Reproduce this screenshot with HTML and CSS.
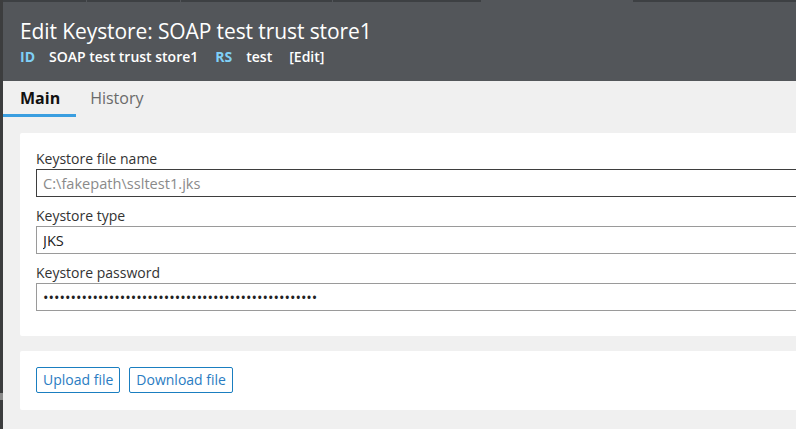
FILE: index.html
```html
<!DOCTYPE html>
<html>
<head>
<meta charset="utf-8">
<link rel="stylesheet" href="styles.css">
</head>
<body>
<div class="app">
  <div class="edge"><span class="grip"></span></div>
  <div class="main">
    <header class="header">
      <div class="strip">
        <span class="seg s1"></span><span class="seg s2"></span><span class="seg s3"></span><span class="seg s4"></span><span class="seg active"></span><span class="seg s5"></span>
      </div>
      <h1 class="title">Edit Keystore: SOAP test trust store1</h1>
      <div class="meta">
        <span class="key">ID</span><span class="val">SOAP test trust store1</span>
        <span class="key">RS</span><span class="val">test</span>
        <span class="val edit">[Edit]</span>
      </div>
    </header>
    <nav class="tabs">
      <span class="tab current">Main</span>
      <span class="tab">History</span>
    </nav>
    <div class="content">
      <section class="panel form">
        <label class="field">
          <span class="label">Keystore file name</span>
          <input class="input readonly focused" type="text" value="C:\fakepath\ssltest1.jks" readonly>
        </label>
        <label class="field">
          <span class="label">Keystore type</span>
          <input class="input" type="text" value="JKS">
        </label>
        <label class="field">
          <span class="label">Keystore password</span>
          <input class="input" type="password" value="soaptestpasswordsoaptestpasswordsoaptestpassword12">
        </label>
      </section>
      <section class="panel actions">
        <button class="btn">Upload file</button>
        <button class="btn">Download file</button>
      </section>
    </div>
  </div>
</div>
</body>
</html>
```
FILE: styles.css
```css
* { box-sizing: border-box; }
html, body { margin: 0; padding: 0; }
body {
  width: 796px;
  height: 429px;
  overflow: hidden;
  background: #f0f0f0;
  font-family: "Open Sans", "Noto Sans", sans-serif;
}
.app { display: flex; height: 429px; }
.edge {
  width: 3px;
  flex: none;
  background: #3c3d3e;
  display: flex;
  flex-direction: column;
  padding-top: 393px;
}
.grip { height: 7px; background: #8a8a8a; }
.main { flex: 1; display: flex; flex-direction: column; min-width: 0; }
.header {
  background: #53565a;
  height: 81px;
  color: #fff;
  padding: 0 0 0 17px;
}
.strip {
  display: flex;
  height: 2px;
  margin-left: -17px;
  gap: 1px;
}
.seg { background: #3d4043; height: 2px; }
.s1 { width: 83px; }
.s2 { width: 93px; }
.s3 { width: 151px; }
.s4 { width: 148px; }
.seg.active { background: #53565a; width: 152px; margin-left: -1px; margin-right: -1px; }
.s5 { flex: 1; }
.title {
  margin: 15px 0 0 0;
  font-weight: 400;
  font-size: 21px;
  line-height: 28px;
  letter-spacing: -0.1px;
}
.meta {
  display: flex;
  align-items: baseline;
  margin-top: 2px;
  font-size: 14px;
  font-weight: 600;
  line-height: 20px;
}
.key { color: #7fd0f7; font-weight: 700; margin-right: 14px; }
.val { margin-right: 17px; }
.tabs {
  height: 36px;
  display: flex;
  align-items: stretch;
}
.tab {
  font-size: 16px;
  line-height: 34px;
  color: #6a6a6a;
  padding: 0 16px 0 14px;
  border-bottom: 3px solid transparent;
}
.tab.current {
  color: #111;
  font-weight: 700;
  padding: 0 16px 0 17px;
  border-bottom-color: #3a9ee0;
}
.content { padding: 16px 0 0 17px; display: flex; flex-direction: column; gap: 15px; }
.panel { background: #fff; border-radius: 2px 0 0 2px; }
.form {
  padding: 16px 0 25px 16px;
  display: flex;
  flex-direction: column;
  gap: 9px;
  height: 203px;
}
.field { display: flex; flex-direction: column; }
.label {
  font-size: 14px;
  line-height: 20px;
  color: #333;
}
.input {
  height: 28px;
  width: 100%;
  border: 1px solid #9a9a9a;
  border-right: none;
  padding: 0 6px;
  font-family: "Open Sans", "Noto Sans", sans-serif;
  font-size: 14.6px;
  color: #222;
  background: #fff;
  outline: none;
}
.input.readonly { color: #8a8a8a; }
.input.focused { border-color: #3e3e3e; }
.actions {
  height: 59px;
  padding: 16px 0 0 16px;
  display: flex;
  align-items: flex-start;
  gap: 9px;
}
.btn {
  height: 26px;
  padding: 0 6px;
  border: 1px solid #1a7ec0;
  border-radius: 2px;
  background: #fff;
  color: #2a7cc2;
  font-family: "Open Sans", "Noto Sans", sans-serif;
  font-size: 14px;
  line-height: 24px;
}
```
